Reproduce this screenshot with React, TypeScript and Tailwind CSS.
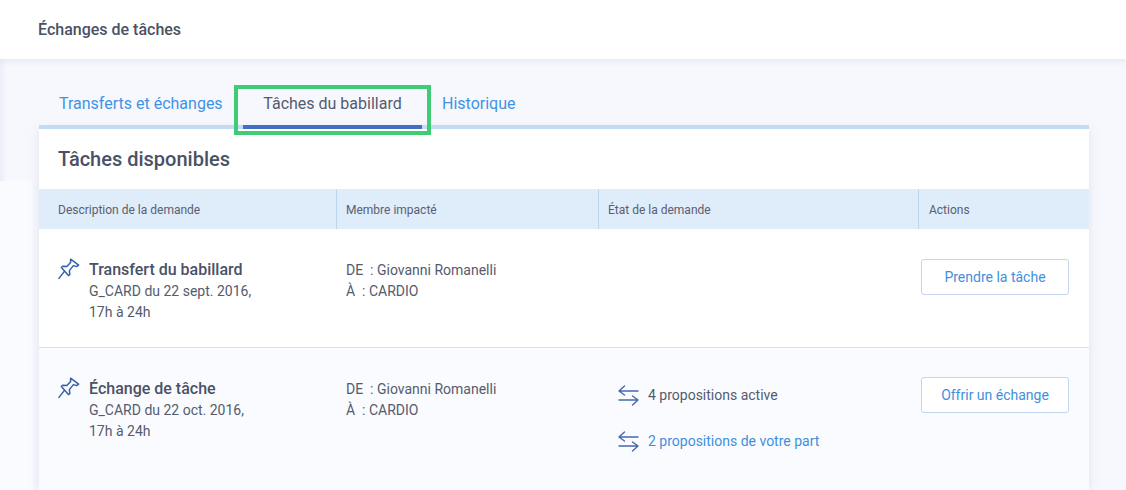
import React from "react";

function Pin() {
  return (
    <svg width="22" height="22" viewBox="0 0 22 22" fill="none" stroke="#3560ab" strokeWidth="1.5" strokeLinejoin="round" strokeLinecap="round" className="shrink-0">
      <path d="M12.6 1.2 L20.6 7.2 L18.6 8.6 L15.4 7.6 L11.4 12.6 L11.8 16.6 L10.4 17.6 L3.4 9.4 L5 8.2 L8.8 8.6 L12.6 4.4 Z" />
      <path d="M6.4 13.4 L1 20.4" />
    </svg>
  );
}

function Swap() {
  return (
    <svg width="21" height="21" viewBox="0 0 21 21" fill="none" stroke="#4568ae" strokeWidth="1.4" strokeLinecap="round" strokeLinejoin="round" className="shrink-0">
      <path d="M1 6 H20 M6.5 1 L1 6 L6.5 10" />
      <path d="M1 15 H20 M14.5 11 L20 15 L14.5 20" />
    </svg>
  );
}

function Member() {
  return (
    <div className="pt-[31px] pl-[9px] text-[14px] leading-[21px]">
      <div>DE&nbsp; : Giovanni Romanelli</div>
      <div>À&nbsp; : CARDIO</div>
    </div>
  );
}

function Desc({ title, date }: { title: string; date: string }) {
  return (
    <div className="flex pl-[19px] pt-[29px]">
      <div className="w-[31px]"><Pin /></div>
      <div className="pt-[1px]">
        <div className="text-[16px] leading-[22px] font-medium text-[#4a5165]">{title}</div>
        <div className="text-[14px] leading-[21px]">{date}</div>
        <div className="text-[14px] leading-[21px]">17h à 24h</div>
      </div>
    </div>
  );
}

function Btn({ label }: { label: string }) {
  return (
    <div className="w-[148px] h-[36px] flex items-center justify-center rounded-[3px] border border-[#c2d5f3] bg-white text-[14px] text-[#3f8fe0]">
      {label}
    </div>
  );
}

const cols = "grid grid-cols-[298px_262px_320px_170px]";

export default function App() {
  return (
    <div className="relative w-[1126px] h-[490px] overflow-hidden bg-[#f7f8fd] text-[#545b6e] [font-family:Roboto,sans-serif]">
      <div className="absolute left-0 top-[59px] w-[33px] h-[431px] bg-gradient-to-r from-[#ebeef9] to-[#f7f8fd] to-[20%]" />
      <div className="absolute left-0 top-[181px] w-[33px] h-[309px] bg-[#f9fbff]" />
      <header className="relative h-[59px] bg-white shadow-[0_2px_6px_rgba(90,110,170,0.12)] pl-[38px] pt-[20px] text-[16px] leading-[20px] font-medium text-[#4a5165]">
        Échanges de tâches
      </header>
      <main className="relative pl-[39px] pt-[26px]">
        <div className="w-[1050px]">
          <nav className="relative flex h-[44px] border-b-4 border-[#c2dcf5] text-[16px]">
            <div className="pl-[20px] w-[204px] pt-[9px] leading-[20px] text-[#3f93e6]">Transferts et échanges</div>
            <div className="w-[179px] -mb-[4px] h-[44px] border-b-4 border-[#3f6fc6] pt-[9px] leading-[20px] text-center text-[#545b6e]">Tâches du babillard</div>
            <div className="pl-[20px] pt-[9px] leading-[20px] text-[#3f93e6]">Historique</div>
            <div className="absolute left-[195px] top-[0px] w-[197px] h-[50px] border-4 border-[#3ecd75]" />
          </nav>
          <section className="bg-white shadow-[0_0_10px_rgba(90,110,170,0.15)]">
            <h2 className="h-[60px] pl-[19px] pt-[18px] text-[20px] leading-[24px] font-medium text-[#4a5165]">Tâches disponibles</h2>
            <div className={`${cols} h-[40px] bg-[#dfecfa] text-[12px] leading-[38px] text-[#596072]`}>
              <div className="pl-[19px] pt-[2px] border-r border-[#bdd6f0]">Description de la demande</div>
              <div className="pl-[9px] pt-[2px] border-r border-[#bdd6f0]">Membre impacté</div>
              <div className="pl-[9px] pt-[2px] border-r border-[#bdd6f0]">État de la demande</div>
              <div className="pl-[10px] pt-[2px]">Actions</div>
            </div>
            <div className={`${cols} h-[119px] border-b border-[#d9e0ec] bg-white`}>
              <Desc title="Transfert du babillard" date="G_CARD du 22 sept. 2016," />
              <Member />
              <div />
              <div className="pt-[30px] pl-[2px]"><Btn label="Prendre la tâche" /></div>
            </div>
            <div className={`${cols} h-[142px] bg-[#fafbfe]`}>
              <Desc title="Échange de tâche" date="G_CARD du 22 oct. 2016," />
              <Member />
              <div className="pl-[19px] pt-[37px] text-[14px]">
                <div className="flex items-center gap-[9px] h-[21px]"><Swap /><span>4 propositions active</span></div>
                <div className="flex items-center gap-[9px] h-[21px] mt-[25px] text-[#3f8fe0]"><Swap /><span>2 propositions de votre part</span></div>
              </div>
              <div className="pt-[29px] pl-[2px]"><Btn label="Offrir un échange" /></div>
            </div>
          </section>
        </div>
      </main>
    </div>
  );
}
